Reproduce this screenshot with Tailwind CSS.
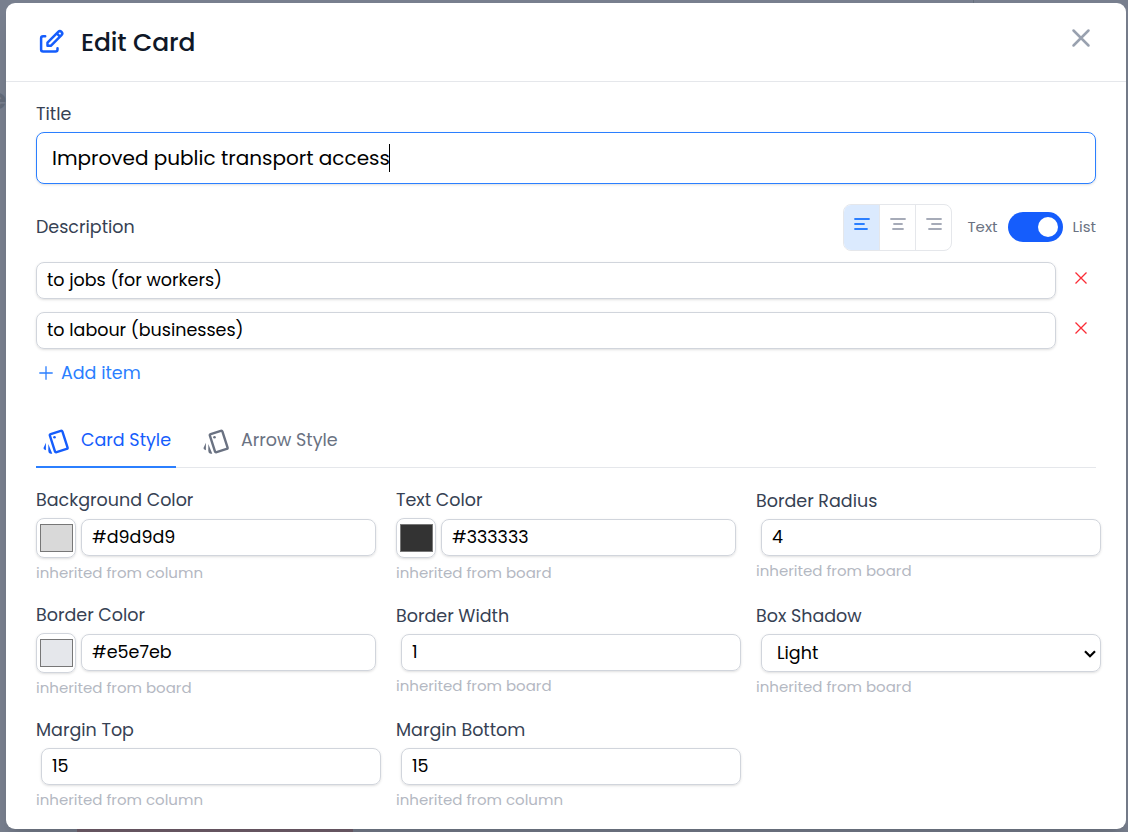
<!DOCTYPE html>
<html lang="en">
<head>
  <meta charset="UTF-8">
  <meta name="viewport" content="width=device-width, initial-scale=1.0">
  <title>Edit Card</title>
  <script src="https://cdn.jsdelivr.net/npm/@tailwindcss/browser@4"></script>
</head>
<body class="relative h-screen overflow-hidden bg-[#787f8e] pt-[3px] pr-0.5 pb-[3px] pl-1.5 font-['Poppins','Inter',sans-serif] text-black">
  <!-- Dimmed board behind the dialog -->
  <span class="absolute top-[79px] -left-[11px] text-[28px] font-semibold text-[#646c7a]">e</span>
  <div class="absolute top-0 left-[973px] h-1 w-px bg-[#66707d]"></div>
  <div class="absolute bottom-0 left-[77px] h-2 w-[276px] bg-[#75626f]"></div>

  <div class="relative h-full rounded-[9px] bg-white shadow-xl">

    <!-- Header -->
    <div class="flex h-[79px] items-center border-b border-gray-200 pr-[34px] pl-[30px]">
      <svg class="size-[30px]" viewBox="0 0 30 30" fill="none" stroke="#155dfc" stroke-width="2.5" stroke-linecap="round" stroke-linejoin="round">
        <path d="M9.200 9.200H7.100a2 2 0 0 0-2 2v11.400a2 2 0 0 0 2 2H19.500a2 2 0 0 0 2-2V21.200"/>
        <path d="M11.500 18.800V15.600L22.200 4.900a2.300 2.300 0 0 1 3.300 3.300L14.800 18.800zM20.800 6.400l3.200 3.200"/>
      </svg>
      <h1 class="mt-0.5 ml-[15px] text-[25px] font-medium tracking-[-0.1px] text-gray-900">Edit Card</h1>
      <svg class="mb-2 ml-auto size-[22px]" viewBox="0 0 22 22" fill="none" stroke="#99a1af" stroke-width="2.500" stroke-linecap="round">
        <path d="M3.500 3.500l15 15M18.500 3.500l-15 15"/>
      </svg>
    </div>

    <div class="px-[30px] pt-5">
      <label class="block text-[17.5px] leading-6 text-gray-700">Title</label>
      <div class="mt-1.5 flex h-[52px] items-center rounded-lg border border-[#2b7fff] pl-[15px] text-[20px] shadow-sm">
        <span class="-mr-px">Improved public transport access</span>
        <span class="h-7 w-px bg-black"></span>
      </div>

      <!-- Description -->
      <div class="mt-5 flex h-[47px] items-center text-[15px] text-gray-500">
        <label class="text-[17.5px] text-gray-700">Description</label>
        <div class="ml-auto flex h-[47px] w-[109px] overflow-hidden rounded-lg border border-gray-200">
          <button class="flex w-[35px] justify-center bg-blue-100 pt-[11px] pl-px">
            <svg class="size-4" fill="none" stroke="#2b7fff" stroke-width="1.800" stroke-linecap="round" viewBox="0 0 16 16"><path d="M1 3h14M1 8h9M1 13h12"/></svg>
          </button>
          <button class="flex w-9 justify-center border-l border-gray-200 pt-[11px]">
            <svg class="size-4" fill="none" stroke="#a6abb8" stroke-width="1.800" stroke-linecap="round" viewBox="0 0 16 16"><path d="M1 3h14M4 8h8M3 13h10"/></svg>
          </button>
          <button class="flex flex-1 justify-center border-l border-gray-200 pt-[11px]">
            <svg class="size-4" fill="none" stroke="#a6abb8" stroke-width="1.800" stroke-linecap="round" viewBox="0 0 16 16"><path d="M1 3h14M6 8h9M3 13h12"/></svg>
          </button>
        </div>
        <span class="ml-[15px] w-[41px] pl-[0.5px]">Text</span>
        <div class="mb-px flex h-[30px] w-[55px] justify-end rounded-full bg-[#155dfc] p-[5px]">
          <div class="size-5 rounded-full bg-white"></div>
        </div>
        <span class="ml-[9px] w-6 pl-[0.5px]">List</span>
      </div>

      <div class="mt-[11px] flex">
        <input class="h-[37px] w-[1020px] rounded-lg border border-gray-300 px-2.5 pb-0.5 text-[17.5px] shadow-sm" value="to jobs (for workers)">
        <svg class="mt-2.5 ml-[19px] size-3" fill="none" stroke="#fb2c36" stroke-width="1.300" viewBox="0 0 12 12"><path d="M.5.5l11 11M11.500.5l-11 11"/></svg>
      </div>
      <div class="mt-[13px] flex">
        <input class="h-[37px] w-[1020px] rounded-lg border border-gray-300 px-2.5 pb-0.5 text-[17.5px] shadow-sm" value="to labour (businesses)">
        <svg class="mt-2.5 ml-[19px] size-3" fill="none" stroke="#fb2c36" stroke-width="1.300" viewBox="0 0 12 12"><path d="M.5.5l11 11M11.500.5l-11 11"/></svg>
      </div>
      <button class="mt-3 flex h-6 items-center pl-[3px] text-[17.5px] text-[#2b7fff]">
        <svg class="size-3.5" fill="none" stroke="currentColor" stroke-width="1.300" viewBox="0 0 14 14"><path d="M7 .3v13.400M.3 7h13.400"/></svg>
        <span class="ml-2">Add item</span>
      </button>

      <!-- Tabs -->
      <div class="mt-[30px] flex h-[53px] border-b border-gray-200 text-[17.5px]">
        <div class="flex h-[53px] w-[140px] items-center border-b-2 border-[#2b7fff] pl-[5px] text-[#155dfc]">
          <svg class="mt-0.5 size-[30px] shrink-0" viewBox="0 0 30 30" fill="currentColor">
            <rect x="11.100" y="5" width="13.200" height="19" rx="1.300" transform="rotate(-18 17.700 14.500)" fill="none" stroke="currentColor" stroke-width="2.400"/>
            <circle cx="13.500" cy="10.300" r="1.300"/>
            <path d="M7.300 17l4 9.700H9.800Q7.300 26.500 7.300 24zM4.900 15.800v7.400Q2.100 22.500 2.500 21z"/>
          </svg>
          <span class="ml-2.5 whitespace-nowrap">Card Style</span>
        </div>
        <div class="ml-5 flex h-[53px] items-center border-b-2 border-transparent pl-[5px] text-gray-500">
          <svg class="mt-0.5 size-[30px] shrink-0" viewBox="0 0 30 30" fill="currentColor">
            <rect x="11.100" y="5" width="13.200" height="19" rx="1.300" transform="rotate(-18 17.700 14.500)" fill="none" stroke="currentColor" stroke-width="2.400"/>
            <circle cx="13.500" cy="10.300" r="1.300"/>
            <path d="M7.300 17l4 9.700H9.800Q7.300 26.500 7.300 24zM4.900 15.800v7.400Q2.100 22.500 2.500 21z"/>
          </svg>
          <span class="ml-2.5 whitespace-nowrap">Arrow Style</span>
        </div>
      </div>

      <!-- Card style fields -->
      <div class="mt-5 grid auto-rows-[115px] grid-cols-[340px_340px_340px] gap-x-5 text-[17.5px] leading-6 text-gray-700">
        <div>
          <label class="block">Background Color</label>
          <div class="mt-1.5 flex gap-[5px]">
            <input type="color" value="#d9d9d9" class="size-10 rounded-lg border border-gray-300 py-px pr-0 pl-px shadow-sm">
            <input class="mt-px h-[37px] w-[295px] rounded-lg border border-gray-300 px-2.5 pb-0.5 text-black shadow-sm" value="#d9d9d9">
          </div>
          <p class="mt-[5px] text-[15px] leading-5 text-[#b4b8c2]">inherited from column</p>
        </div>
        <div>
          <label class="block">Text Color</label>
          <div class="mt-1.5 flex gap-[5px]">
            <input type="color" value="#333333" class="size-10 rounded-lg border border-gray-300 py-px pr-0 pl-px shadow-sm">
            <input class="mt-px h-[37px] w-[295px] rounded-lg border border-gray-300 px-2.5 pb-0.5 text-black shadow-sm" value="#333333">
          </div>
          <p class="mt-[5px] text-[15px] leading-5 text-[#b4b8c2]">inherited from board</p>
        </div>
        <div class="pt-px">
          <label class="block">Border Radius</label>
          <input class="mt-1.5 ml-[5px] block h-[37px] w-[340px] rounded-lg border border-gray-300 px-2.5 pb-0.5 text-black shadow-sm" value="4">
          <p class="mt-[5px] text-[15px] leading-5 text-[#b4b8c2]">inherited from board</p>
        </div>

        <div>
          <label class="block">Border Color</label>
          <div class="mt-1.5 flex gap-[5px]">
            <input type="color" value="#e5e7eb" class="size-10 rounded-lg border border-gray-300 py-px pr-0 pl-px shadow-sm">
            <input class="mt-px h-[37px] w-[295px] rounded-lg border border-gray-300 px-2.5 pb-0.5 text-black shadow-sm" value="#e5e7eb">
          </div>
          <p class="mt-[5px] text-[15px] leading-5 text-[#b4b8c2]">inherited from board</p>
        </div>
        <div class="pt-px">
          <label class="block">Border Width</label>
          <input class="mt-1.5 ml-[5px] block h-[37px] w-[340px] rounded-lg border border-gray-300 px-2.5 pb-0.5 text-black shadow-sm" value="1">
          <p class="mt-[5px] text-[15px] leading-5 text-[#b4b8c2]">inherited from board</p>
        </div>
        <div class="pt-px">
          <label class="block">Box Shadow</label>
          <div class="relative mt-1.5 ml-[5px] w-[340px]">
            <select class="block h-[38px] w-full appearance-none rounded-lg border border-gray-300 pl-[15px] text-black shadow-sm">
              <option>Light</option>
            </select>
            <svg class="pointer-events-none absolute top-4 right-[5px] h-2 w-3" viewBox="0 0 12 8" fill="none" stroke="#000" stroke-width="2.200"><path d="M1 1.200l5 5 5-5"/></svg>
          </div>
          <p class="mt-[5px] text-[15px] leading-5 text-[#b4b8c2]">inherited from board</p>
        </div>

        <div>
          <label class="block">Margin Top</label>
          <input class="mt-1.5 ml-[5px] block h-[37px] w-[340px] rounded-lg border border-gray-300 px-2.5 pb-0.5 text-black shadow-sm" value="15">
          <p class="mt-[5px] text-[15px] leading-5 text-[#b4b8c2]">inherited from column</p>
        </div>
        <div>
          <label class="block">Margin Bottom</label>
          <input class="mt-1.5 ml-[5px] block h-[37px] w-[340px] rounded-lg border border-gray-300 px-2.5 pb-0.5 text-black shadow-sm" value="15">
          <p class="mt-[5px] text-[15px] leading-5 text-[#b4b8c2]">inherited from column</p>
        </div>
      </div>
    </div>
  </div>
</body>
</html>
